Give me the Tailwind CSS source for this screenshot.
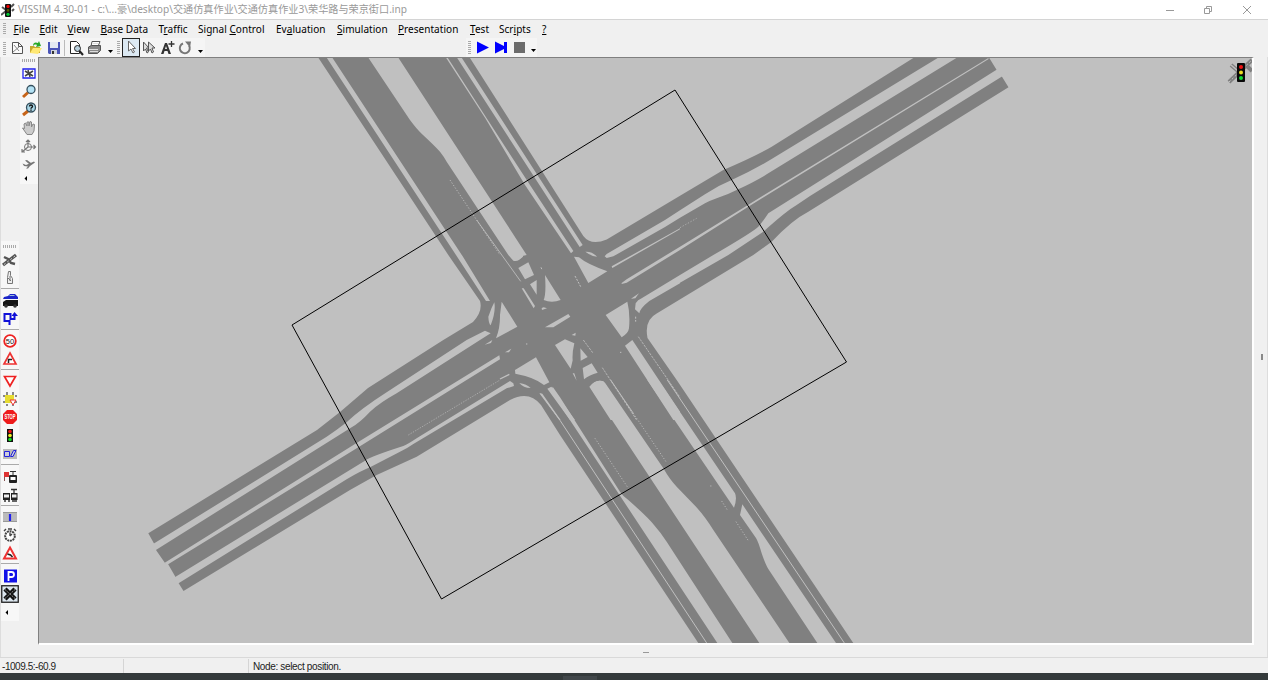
<!DOCTYPE html>
<html lang="en">
<head>
<meta charset="utf-8">
<title>VISSIM 4.30-01</title>
<script src="https://cdn.jsdelivr.net/npm/@tailwindcss/browser@4"></script>
</head>
<body class="w-[1268px] h-[680px] overflow-hidden bg-[#f0f0f0] flex flex-col text-black font-['Noto_Sans','Noto_Sans_CJK_SC',sans-serif]">
<!-- title bar -->
<header class="h-5 shrink-0 bg-white border-b border-[#d4d4d4] flex items-center">
  <svg class="w-[14px] h-[14px] ml-px shrink-0" viewBox="0 0 14 14"><path d="M1 4l4 3M0 12l5-4M10 4l3-3M11 8l2-2" stroke="#555" stroke-width="2"/><rect x="4" y="1" width="6" height="13" rx="1" fill="#111"/><circle cx="7" cy="3.400" r="1.600" fill="#e00"/><circle cx="7" cy="7.400" r="1.300" fill="#550"/><circle cx="7" cy="11.300" r="1.600" fill="#0c3"/></svg>
  <svg class="h-[19px] w-[400px] ml-[3px] shrink-0 overflow-visible"><text x="0" y="13" font-size="10.5" fill="#999" textLength="389" lengthAdjust="spacingAndGlyphs">VISSIM 4.30-01 - c:\...豪\desktop\交通仿真作业\交通仿真作业3\荣华路与荣京街口.inp</text></svg>
  <svg class="w-[90px] h-[18px] ml-auto mr-[14px]" viewBox="0 0 90 18" fill="none" stroke="#999"><path d="M2 9.500h8M40.500 7.500h5v5h-5zM42.500 7v-1.500h5v5h-1.500M79 5l8 8M87 5l-8 8"/></svg>
</header>
<!-- menu -->
<nav class="h-[18px] shrink-0 flex items-center pl-[3px] text-[10px] leading-none whitespace-nowrap tracking-[0.04px]">
  <svg class="w-[10.500px] h-4 shrink-0"><path d="M1.500 2v12" stroke="#aaa" stroke-width="3" stroke-dasharray="1 1"/></svg>
  <span class="w-[26px]"><u>F</u>ile</span><span class="w-[28px]"><u>E</u>dit</span><span class="w-[33px]"><u>V</u>iew</span><span class="w-[58px]"><u>B</u>ase Data</span><span class="w-[39.500px]">T<u>r</u>affic</span><span class="w-[78px]">Signal <u>C</u>ontrol</span><span class="w-[61px]">Ev<u>a</u>luation</span><span class="w-[61px]"><u>S</u>imulation</span><span class="w-[72px]"><u>P</u>resentation</span><span class="w-[29px]"><u>T</u>est</span><span class="w-[43px]">Scr<u>i</u>pts</span><span><u>?</u></span>
</nav>
<!-- toolbar -->
<div class="h-[19px] shrink-0 flex items-center">
  <div class="flex items-center h-[19px] pl-[3px] w-[205px] bg-[#f5f5f5] [&>svg]:shrink-0">
    <svg class="w-[5px] h-4"><path d="M1.500 2v13" stroke="#aaa" stroke-width="3" stroke-dasharray="1 1"/></svg>
    <svg class="w-[18px] h-[18px]" viewBox="0 0 18 18" fill="none" stroke="#555"><path d="M4.500 3.500h6l4 4v7h-10zM10.500 3.500v4h4" fill="#fafafa"/><path d="M5 13l6-5M6 6l5 6" stroke="#888"/></svg>
    <svg class="w-[18px] h-[18px]" viewBox="0 0 18 18"><path d="M4 7h4l1 1h5v6H4z" fill="#c7a92e"/><path d="M4 14l3-5h9l-4 6z" fill="#ffe873"/><path d="M7 7c0-4 3-4 5-3l1-2 2 5-5 1 1-2c-2-1-3 0-4 1z" fill="#28a828"/></svg>
    <svg class="w-[19px] h-[18px]" viewBox="0 0 19 18"><path d="M4 3h12v12H5l-1-1z" fill="#4b55b8"/><path d="M6 3h8v6H6z" fill="#e4e9f2"/><path d="M7 11h6v4H7z" fill="#cfd2dc"/><path d="M8 12h2v3H8z" fill="#333"/></svg>
    <i class="w-px h-4 bg-[#bbb] ml-px mr-[2px]"></i>
    <svg class="w-[18px] h-[18px]" viewBox="0 0 18 18" fill="none" stroke="#222"><path d="M3.500 2.500h6l3 3v9h-9z" fill="#fff"/><circle cx="10.500" cy="9.500" r="3" fill="#b9d0dd"/><path d="M12.500 12l3.500 4" stroke-width="2"/></svg>
    <svg class="w-[20px] h-[18px]" viewBox="0 0 20 18" stroke="#555"><path d="M7 2.500h8l-2 5H6z" fill="#fff"/><path d="M3.500 8l3-1.500h9v5l-3 3h-9z" fill="#888"/><path d="M4 10.500h9M5 12.500h8M8 4.500h5" stroke="#ddd"/></svg>
    <svg class="w-[10px] h-[18px]"><path d="M3 11h5l-2.500 3z"/></svg>
    <svg class="w-[5px] h-4 ml-[2px]"><path d="M1.500 1v14" stroke="#aaa" stroke-width="3" stroke-dasharray="1 1"/></svg>
    <div class="w-[18px] h-[19px] shrink-0 border border-[#222] bg-[#dce9f3]"><svg class="w-4 h-4" viewBox="0 0 16 16"><path d="M5.500 2v10l2.500-2 2 4 1.500-1-2-3.500 3 0z" fill="#fff" stroke="#666"/></svg></div>
    <svg class="w-[18px] h-[18px]" viewBox="0 0 18 18" fill="#ddd" stroke="#555"><path d="M3.500 3v9l2-2 1.500 4 1.500-1-2-4h2.500z"/><path d="M8.500 3v9l2-2 1.500 4 1.500-1-1.500-4h3z"/></svg>
    <svg class="w-[18px] h-[18px]" viewBox="0 0 18 18"><path d="M3 15L7 4h2l4 11h-2.500l-1-3H6.500l-1 3z M7 10h2L8 7z" fill="#333" fill-rule="evenodd"/><path d="M13.500 2v6M10.500 5h6" stroke="#333" stroke-width="1.300"/></svg>
    <svg class="w-[18px] h-[18px]" viewBox="0 0 18 18"><path d="M7 4.500a5 5 0 1 0 6 2" stroke="#777" stroke-width="2" fill="none"/><path d="M9 2.500h6l-1 6z" fill="#777"/></svg>
    <svg class="w-[10px] h-[18px]"><path d="M4 11h5l-2.500 3z"/></svg>
  </div>
  <div class="flex items-center h-[19px] ml-[261px] w-[71px] bg-[#f5f5f5]">
    <svg class="w-[71px] h-[19px]" viewBox="466 38 71 19"><path d="M469.500 41v13" stroke="#aaa" stroke-width="3" stroke-dasharray="1 1"/><path d="M477 41.500v12l12-6zM495 41.500v12l9-4.500v4h3v-11h-3v4z" fill="#00f"/><path d="M514 42h11v11h-11z" fill="#6c6c6c"/><path d="M531 49h5l-2.500 3z"/></svg>
  </div>
</div>
<!-- workspace -->
<main class="h-[600px] shrink-0 flex">
  <aside class="w-[38px] h-full shrink-0 flex border-l border-[#ddd]">
    <div class="w-[19px] pt-[184px] flex flex-col items-start">
      <div class="bg-[#f7f7f7] w-[18px] flex flex-col [&>svg]:w-[18px] [&>svg]:h-[18px] [&>svg]:shrink-0">
        <div class="h-[10px] pl-[2px]"><svg class="w-[14px] h-[10px] block"><path d="M0 5.500h14" stroke="#aaa" stroke-width="3" stroke-dasharray="1 1"/></svg></div>
        <svg viewBox="0 0 18 18" fill="none" stroke="#555"><path d="M2 14L15 4" stroke-width="3.200"/><path d="M3 6l4 2 3 4 4 1" stroke-width="2.400"/><path d="M3 13.500L14 5" stroke="#ccc" stroke-dasharray="2 2"/></svg>
        <svg viewBox="0 0 18 18" fill="#eee" stroke="#777"><path d="M7.500 2.500h2v4l2 3v5h-5v-6z"/><path d="M7 9l3 3M9 7v5"/></svg>
        <div class="h-[5px] pt-px"><div class="h-px bg-[#aaa]"></div></div>
        <svg viewBox="0 0 18 18"><path d="M2 7l1-2 4-1 2-2h5l3 3v2z" fill="#1b25c8"/><path d="M8 4l1-1h4l1 1z" fill="#9bd"/><path d="M2 10l3-2h12v6H2z" fill="#161616"/><circle cx="5" cy="14" r="1.800" fill="#333"/><circle cx="14" cy="14" r="1.800" fill="#333"/></svg>
        <svg viewBox="0 0 18 18"><path d="M8.500 15v-4h-5V4h6v5h4V5" stroke="#1111d8" stroke-width="2" fill="none"/><path d="M10.500 6l3-4 3.500 4z" fill="#1111d8"/></svg>
        <div class="h-[4px] pt-px"><div class="h-px bg-[#aaa]"></div></div>
        <svg viewBox="0 0 18 18"><circle cx="9" cy="9" r="5.800" fill="#fff" stroke="#e22" stroke-width="1.800"/><text x="9" y="11.700" text-anchor="middle" font-size="7.500" fill="#222" font-family="Liberation Sans">50</text></svg>
        <svg viewBox="0 0 18 18" fill="none"><path d="M9 3l6 11H3z" fill="#fff" stroke="#e33" stroke-width="1.700"/><path d="M7.500 13V9.500h3.500" stroke="#222" stroke-width="1.500"/></svg>
        <div class="h-[4px] pt-px"><div class="h-px bg-[#aaa]"></div></div>
        <svg viewBox="0 0 18 18"><path d="M3.500 4.500h11L9 14z" fill="#fff" stroke="#e22" stroke-width="1.700"/></svg>
        <svg viewBox="0 0 18 18"><path d="M6 2v14M12 2v14M2 6h14M2 12h14" stroke="#888" stroke-width="2" stroke-dasharray="3 1"/><path d="M4 5h9v8H4z" fill="#e6dc32"/><path d="M9 10h6l-3 5z" fill="#fff" stroke="#e33"/></svg>
        <svg class="overflow-visible" viewBox="0 0 18 18"><path d="M6 2h6l4 4v6l-4 4H6l-4-4V6z" fill="#ee1c1c"/><text x="3.500" y="11.300" font-size="6.500" textLength="11" lengthAdjust="spacingAndGlyphs" font-weight="bold" fill="#fff" font-family="Liberation Sans">STOP</text></svg>
        <svg viewBox="0 0 18 18"><rect x="6" y="3" width="6" height="13" fill="#111"/><circle cx="9" cy="5.500" r="1.800" fill="#e11"/><circle cx="9" cy="9.500" r="1.800" fill="#ee2"/><circle cx="9" cy="13.500" r="1.800" fill="#1d2"/></svg>
        <svg viewBox="0 0 18 18"><path d="M2 5h14v10H2z" fill="#bbb"/><path d="M3.500 7.500h5v5h-5zM9.500 12.500l3-6h2.500l-3 6z" stroke="#22d" fill="#ccd"/></svg>
        <div class="h-[6px] pt-[2px]"><div class="h-px bg-[#aaa]"></div></div>
        <svg viewBox="0 0 18 18"><path d="M3.500 13V4" stroke="#855"/><path d="M3 4h5v5H3z" fill="#d33"/><rect x="8" y="7" width="8" height="8" rx="1" fill="#222"/><path d="M9.500 9h5v3h-5z" fill="#fff"/><path d="M12 7V4M9 3.500h6" stroke="#333"/></svg>
        <svg viewBox="0 0 18 18"><rect x="2" y="7" width="7" height="7" fill="#222"/><rect x="10" y="7" width="6.500" height="7" fill="#222"/><path d="M3 8.500h5v3H3zM11 8.500h4.500v3H11z" fill="#eee"/><path d="M13 7V4M10 3.500h6M3 15h2M7 15h2M11 15h5" stroke="#333" stroke-width="1.300"/></svg>
        <div class="h-[4px] pt-px"><div class="h-px bg-[#aaa]"></div></div>
        <svg viewBox="0 0 18 18"><path d="M2 4h14v10H2z" fill="#bbb"/><path d="M2 4.500h14M2 13.500h14" stroke="#999"/><path d="M9 6v7" stroke="#22e" stroke-width="2.200"/></svg>
        <svg viewBox="0 0 18 18" fill="none" stroke="#444"><circle cx="9" cy="10" r="4.800" fill="#fff" stroke-width="2" stroke-dasharray="2 .7"/><path d="M9 10V6.500M9 10l2-2M7 3h4M3 5l2-2M15 5l-2-2" stroke-width="1.400"/></svg>
        <svg viewBox="0 0 18 18" fill="none"><path d="M9 3.500l6 11H3z" fill="#fff" stroke="#e33" stroke-width="2"/><path d="M6.500 10l3 1 2 2" stroke="#222" stroke-width="1.700"/></svg>
        <div class="h-[5px] pt-px"><div class="h-px bg-[#aaa]"></div></div>
        <svg viewBox="0 0 18 18"><path d="M3 2.500h13v13H3z" fill="#1212e8"/><path d="M7.500 14V5h3a2.500 2.500 0 0 1 0 5h-3" fill="none" stroke="#fff" stroke-width="1.800"/></svg>
        <svg viewBox="0 0 18 18"><rect x=".75" y=".75" width="16.500" height="16.500" fill="#dce6ee" stroke="#222" stroke-width="1.300"/><path d="M4 4l10 10M4 14L14 4" stroke="#111" stroke-width="4.500"/><path d="M4 4.500l10 9M4 13.500l10-9" stroke="#999" stroke-width=".9" stroke-dasharray="2 1"/></svg>
        <svg viewBox="0 0 18 18"><path d="M7 7v5L4.500 9.500z"/></svg>
      </div>
    </div>
    <div class="w-[18px] h-[127px] bg-[#f7f7f7] flex flex-col [&>svg]:w-[18px] [&>svg]:shrink-0">
      <svg class="h-[7px]"><path d="M2 3.500h14" stroke="#aaa" stroke-width="3" stroke-dasharray="1 1"/></svg>
      <svg class="h-[18px]" viewBox="0 0 18 18"><path d="M3 5h12v9H3z" fill="#fff" stroke="#22e" stroke-width="1.300"/><path d="M5 7l8 5M5 12l8-5M8 6l2 7" stroke="#444" stroke-width="1.500"/></svg>
      <svg class="h-[18px]" viewBox="0 0 18 18"><path d="M3 15l5-4.500" stroke="#c76419" stroke-width="3"/><circle cx="11" cy="7.500" r="4" fill="#b4e2f4" stroke="#37515f" stroke-width="1.300"/></svg>
      <svg class="h-[18px]" viewBox="0 0 18 18"><path d="M3 15l5-4" stroke="#c76419" stroke-width="3"/><circle cx="11" cy="7.500" r="4.500" fill="#a9d6e6" stroke="#37515f" stroke-width="1.300"/><path d="M9.500 6.500c0-2 3-2 3 0 0 1-1.500 1-1.500 2.200M11 9.500v1.200" stroke="#111" fill="none" stroke-width="1.400"/></svg>
      <svg class="h-[19px]" viewBox="0 0 18 19"><path d="M2.500 10l2 .5L4 6l1.500-1L7 8V4h2v4l1-4.500 1.500.5V9l1.500-3 1.500.5L14 13l-2 3.500H7z" fill="#ccc" stroke="#888"/></svg>
      <svg class="h-[19px]" viewBox="0 0 18 19" fill="none" stroke="#777"><circle cx="8" cy="10" r="3.500"/><path d="M8 10V3M8 10h8M8 10l-6 5M6 5l2-2 2 2M13.500 8l2 2-2 2M2 12v3h3" stroke-width="1.200"/></svg>
      <svg class="h-[17px]" viewBox="0 0 18 17"><path d="M2.500 7.500l3.500 1.500 8-3.500 1 1-5 3.500-2 2.500H6L8 10.500l-4-.5zM5 4.500l2-.5 4 3-2 1z" fill="#777"/></svg>
      <svg class="h-[12px]" viewBox="0 0 18 12"><path d="M7 3v5L4.500 5.500z"/></svg>
    </div>
  </aside>
  <section class="w-[1216px] h-full shrink-0 flex flex-col">
    <div class="w-[1216px] h-[588px] border-t border-l border-[#808080] border-b-2 border-b-white border-r-2 border-r-white bg-[#c0c0c0]">
      <svg class="block w-[1213px] h-[585px]" viewBox="39 58 1213 585">
        <!-- outline of all links -->
        <path fill="#808080" d="M318.500 58L448.300 255L480 301Q483 311 473 322L443.300 340L368 388L340 412L317 430L148.300 533.300L154 543.500L156.300 550.500L165 563L168 564L175.500 577L178.500 583L183.500 591L350 490L376.700 475L416.700 456.700L510 400Q529 390 541 405L560 435L698.300 643H853.300L676.700 380L647.500 338Q644 320 656.700 313.500L753.300 255L771.700 241.700Q792 220 808.300 211.700L1008.500 87.300L1001.700 76.300L996.700 70L989.300 58H913.300L771.700 146.700Q756 156 723.300 170L680 195.700L606.700 239.500Q591 246 583.300 236L470 58Z"/>
        <!-- medians: northern arm -->
        <g transform="translate(300 55) scale(.33333)" fill="#c0c0c0">
          <path d="M80 8H97L488 604L570 738H558L468 600ZM205 8L330 195Q350 222 365 236Q405 273 420 290Q432 305 440 320L625 600L640 617Q655 622 670 602L680 600L295 8ZM438 8H443L560 190L690 390L820 588L813 595L675 390L556 190ZM471 8H485L848 570L839 576Z"/>
          <path d="M450 375L600 600" stroke="#c0c0c0" stroke-width="2.500" stroke-dasharray="4 5"/>
        </g>
        <!-- medians: eastern arm -->
        <g transform="translate(680 55) scale(.33333)">
          <path fill="#c0c0c0" d="M778 6L270 315Q220 345 155 375Q115 391 75 418L0 466L-45 495L-220 597L-226 604L-220 609L-200 604L-45 516L0 488L75 445Q90 437 110 430Q145 418 170 405Q225 380 260 358L834 6ZM0 575L205 449L925 9L926 12L205 455L0 585L-160 683L-175 687V684L-160 673ZM952 43L265 475Q245 505 235 515Q220 530 100 600L0 660V683L145 600L250 530Q320 467 350 450L390 423L972 61Z"/>
          <path d="M0 518L50 490" stroke="#c0c0c0" stroke-width="2" stroke-dasharray="4 5"/>
        </g>
        <!-- medians: western arm -->
        <g transform="translate(140 340) scale(.33333)">
          <path fill="#c0c0c0" d="M38 613L560 290Q590 270 618 248Q665 205 740 157L980 0L1035 -28L1052 -20L1020 0L770 160Q720 188 690 215Q660 248 630 265L44 632ZM73 669L645 312L1078 46L1080 58L655 322L82 674ZM102 713L675 362Q690 350 790 318Q805 312 830 295L1110 123L1120 130L1122 138L1100 145L820 312Q800 326 780 335L690 382Q660 394 620 418L112 732Z"/>
          <path d="M805 285L1080 120" stroke="#c0c0c0" stroke-width="2" stroke-dasharray="4 4"/><path d="M1080 117L1108 103" stroke="#c0c0c0" stroke-width="4"/>
        </g>
        <!-- medians: southern arm -->
        <g transform="translate(560 380) scale(.33333)">
          <path fill="#c0c0c0" d="M0 52L180 335Q190 350 205 360Q265 413 282 435Q300 455 320 485L517 789H472L0 75L-27 35L-22 20ZM90 20Q105 -2 128 3L135 8L310 265Q330 300 350 320L400 372Q430 402 460 450L688 789H598ZM262 0H295L525 340Q532 355 522 383ZM547 373L828 789H772L625 567Q617 555 605 520Q595 485 588 474L540 405Z"/>
          <g stroke="#c0c0c0" fill="none"><path d="M-58 40L0 121L440 789" stroke-width="3"/><path d="M322 0L853 789" stroke-width="3"/><path d="M152 0L220 100" stroke-width="3"/><path d="M220 100L320 248M105 175L205 325M485 363L502 390M528 425L565 482M451 318h5" stroke-width="3" stroke-dasharray="3 6"/></g>
        </g>
        <!-- junction islands -->
        <g transform="translate(460 220) scale(.33333)">
          <path fill="#c0c0c0" d="M78 0L155 114Q167 126 187 112Q192 107 186 98L127 0ZM342 110L357 112Q380 132 442 154L385 189ZM376 95Q397 94 411 110Q394 109 376 95ZM455 139L660 25V28L457 144ZM175 144L205 127L222 165L195 178ZM210 193L230 180V224ZM185 205H191L225 258L221 265ZM255 165L302 240Q275 250 251 240Q259 223 255 165ZM245 264L251 262L261 265L246 270ZM255 322L325 282L331 290L280 322ZM85 290Q94 263 103 247Q108 275 92 316Q86 311 85 290ZM125 245L172 320L108 355Q121 323 120 285ZM74 374L97 360L93 369ZM135 397L154 386L147 397ZM165 450L228 412L268 487L252 495Q225 472 166 461ZM178 489Q200 492 212 504Q190 504 178 489ZM262 506L274 500L345 600H330ZM238 520L247 521L302 600H298ZM388 500Q408 476 430 484L508 600H452ZM368 444L395 430L413 458Q388 465 372 478ZM361 385L383 411L362 422ZM285 375L315 358L343 370Q336 400 338 421L332 446ZM335 345L347 338L346 347ZM338 460L343 460L350 482ZM437 285L502 245Q511 280 507 325Q505 340 485 352ZM495 377L517 360L523 369L660 575V600H640ZM513 236L537 220L526 235ZM525 268L527 250Q533 239 545 235L660 165V190L568 243Q540 265 538 280Z"/>
          <g stroke="#c0c0c0" fill="none"><path d="M50 0L182 184" stroke-width="2.500"/><path d="M370 360L398 398M427 443L530 600M535 350L660 532" stroke-width="2.500" stroke-dasharray="7 3"/><path d="M345 168L362 200M243 142L247 151M527 290V305M198 372h4M480 397h4" stroke-width="3" stroke-dasharray="6 4"/></g>
        </g>
        <path d="M292 325L675 90L846.500 362L441.500 599Z" fill="none" stroke="#000" stroke-width="1"/>
        <!-- signal emblem -->
        <path d="M1229 82L1252 60M1231 65L1238 71M1246 65L1252 71" stroke="#808080" stroke-width="4"/><path d="M1229 82L1252 60" stroke="#c0c0c0" stroke-dasharray="2 2"/><path d="M1231 65L1238 71" stroke="#c0c0c0" stroke-width="1.500"/><rect x="1237" y="63" width="8" height="19" rx="1" fill="#080808"/><circle cx="1241" cy="67" r="2" fill="#e11"/><circle cx="1241" cy="72.500" r="2" fill="#ed2"/><circle cx="1241" cy="78" r="2" fill="#1d3"/>
      </svg>
    </div>
    <div class="flex-1 flex items-center justify-center"><i class="w-[6px] h-px bg-[#999] mt-[2px]"></i></div>
  </section>
  <div class="flex-1 flex items-center justify-center border-r border-[#ddd]"><i class="w-[2px] h-[6px] bg-[#888] ml-[2px]"></i></div>
</main>
<!-- status bar -->
<footer class="h-[16px] shrink-0 border-t border-[#d9d9d9] flex items-center text-[10px] leading-none font-['Liberation_Sans',sans-serif] text-[#222]">
  <span class="w-[124px] h-[14px] pt-[3px] pl-[2px] border-r border-[#d5d5d5] tracking-[-0.45px]">-1009.5:-60.9</span>
  <span class="w-[125px] h-[14px] border-r border-[#d5d5d5]"></span>
  <span class="pl-[4px] pt-[2px] tracking-[-0.35px]">Node: select position.</span>
</footer>
<div class="flex-1 bg-[#343a3b] flex justify-center"><i class="w-[34px] h-[4px] bg-[#41474a] mt-[3px] -ml-[108px]"></i></div>
</body>
</html>
